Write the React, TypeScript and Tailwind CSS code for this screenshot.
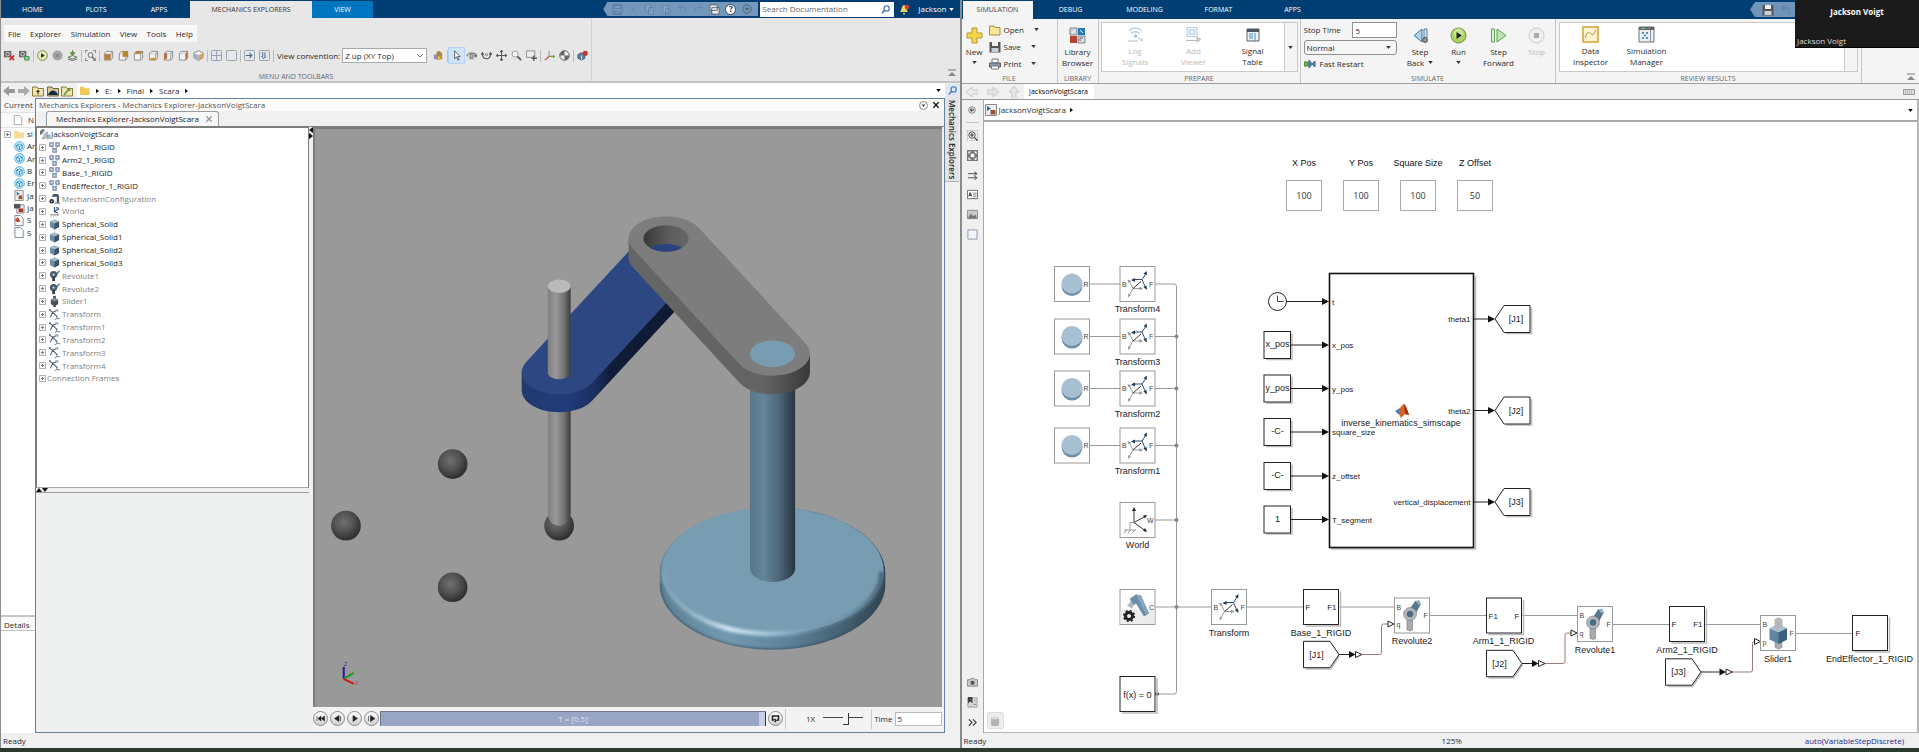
import type { ReactNode } from 'react'

// ---------------------------------------------------------------- helpers

function Ico({ children, size = 'w-3 h-3', box = '0 0 12 12' }: { children: ReactNode; size?: string; box?: string }) {
  return <svg viewBox={box} className={`${size} shrink-0`} fill="none">{children}</svg>
}

function Caret({ className = 'text-[#333]' }: { className?: string }) {
  return <svg viewBox="0 0 6 4" className={`w-[5px] h-[3px] shrink-0 ${className}`}><path d="M0 0h6L3 4z" fill="currentColor" /></svg>
}

function Crumb() {
  return <svg viewBox="0 0 4 6" className="w-[3px] h-1.5 shrink-0"><path d="M0 0l4 3-4 3z" fill="#111" /></svg>
}

function Collapse() {
  return (
    <button aria-label="Collapse toolstrip" className="w-2 h-2 flex">
      <Ico size="w-2 h-2" box="0 0 8 8"><path d="M0 1h8" stroke="#777" /><path d="M4 3l4 4H0z" fill="#888" /></Ico>
    </button>
  )
}

// ---------------------------------------------------------------- toolbar of the explorer

const CUBE = (
  <>
    <path d="M1.500 4h7v7h-7z" fill="#f4f4f4" stroke="#8a8a8a" />
    <path d="M1.500 4l2-2.500h7L8.500 4M10.500 1.500v7l-2 2.500" fill="#eee" stroke="#8a8a8a" />
  </>
)

const PANE = <rect x=".5" y=".5" width="11" height="11" rx="1" fill="#e4e8ec" stroke="#8f9ba7" />

const TOOLBAR: { label: string; icon: ReactNode }[][] = [
  [
    { label: 'Remove link', icon: <><rect x="0" y="1" width="8" height="7" fill="#666" /><circle cx="4" cy="4.500" r="2" stroke="#ddd" /><path d="M6 6l5 5M11 6l-5 5" stroke="#c33c30" strokeWidth="2" /></> },
    { label: 'Add link', icon: <><rect x="0" y="1" width="8" height="7" fill="#666" /><circle cx="4" cy="4.500" r="2" stroke="#ddd" /><path d="M6 7h5v4H6z" fill="#8fc79a" stroke="#3e9550" /></> },
  ],
  [
    { label: 'Run', icon: <><circle cx="6" cy="6" r="5.300" fill="#e6edbd" stroke="#6f8a35" /><path d="M4.500 3.500l4 2.500-4 2.500z" fill="#223" /></> },
    { label: 'Stop', icon: <><circle cx="6" cy="6" r="5.500" fill="#a5a5a5" /><rect x="4" y="4" width="4" height="4" fill="#8d8d8d" /></> },
    { label: 'Update', icon: <><path d="M6 0v4M3.500 3L6 6l2.500-3z" stroke="#4f8a3c" fill="#67a24e" /><path d="M1 8l5-2 5 2-5 2z" fill="#dfe8da" stroke="#5b6b57" /><path d="M1 10l5 1.500L11 10" stroke="#5b6b57" /></> },
  ],
  [
    { label: 'Fit to view', icon: <><path d="M.5 3V.5H3M9 .5h2.500V3M.5 9v2.500H3M9 11.500h2.500V9" stroke="#777" /><circle cx="6" cy="5.500" r="2.600" fill="#eee" stroke="#666" /><path d="M8 8l2.500 2.500" stroke="#555" strokeWidth="1.500" /></> },
  ],
  [
    { label: 'Front view', icon: <>{CUBE}<path d="M2 4.500h6v6H2z" fill="#c47b29" /></> },
    { label: 'Back view', icon: <>{CUBE}<path d="M5 1.500h6v6H5z" fill="#b98627" /></> },
    { label: 'Top view', icon: <>{CUBE}<path d="M1.500 4l2-2.500h7L8.500 4z" fill="#b97a35" /></> },
    { label: 'Bottom view', icon: <>{CUBE}<path d="M1.500 11l2-2.500h6L8.500 11z" fill="#c99a3d" /></> },
    { label: 'Left view', icon: <>{CUBE}<path d="M1.500 4l3-1v6l-3 2z" fill="#b5703a" /></> },
    { label: 'Right view', icon: <>{CUBE}<path d="M8.500 4l2-2.500v7l-2 2.500z" fill="#c4732f" /></> },
    { label: 'Isometric view', icon: <><path d="M6 .8l5 2.400v5.400L6 11.400 1 8.600V3.200z" fill="#f7f7f7" stroke="#888" /><path d="M1 3.200l5 2.600v5.600L1 8.600z" fill="#9fb4cb" /><path d="M6 5.800l5-2.600v5.400l-5 2.800z" fill="#caa46b" /></> },
  ],
  [
    { label: 'Split four', icon: <>{PANE}<path d="M6 1v10M1 6h10" stroke="#8f9ba7" /></> },
    { label: 'Single view', icon: PANE },
  ],
  [
    { label: 'Split vertically', icon: <>{PANE}<path d="M2 6h6M6 3.500L8.500 6 6 8.500" stroke="#4a6480" strokeWidth="1.200" /></> },
    { label: 'Split horizontally', icon: <>{PANE}<path d="M4 2v6M6.500 8.500v-6M2.500 7L5 9.500 7.500 7" stroke="#4a6480" /></> },
  ],
]

const TOOLBAR_RIGHT: { label: string; icon: ReactNode; active?: boolean }[][] = [
  [{ label: 'Highlight', icon: <><path d="M4 2l4-1v9l-4 1z" fill="#7d8f3a" /><path d="M6 2l4 1v7H7z" fill="#c9813a" /><path d="M1 5h4v5H1z" fill="#8d8da8" /><path d="M5 7h3v4H5z" fill="#d9c33b" /></> }],
  [
    { label: 'Select', active: true, icon: <path d="M4 1v8.500l2-2 1.500 3.500 1.300-.6-1.500-3.300H10z" fill="#fff" stroke="#445" strokeWidth=".9" /> },
    { label: 'Rotate', icon: <><path d="M1 7c0-5 10-5 10 0M9 6l2 1.500L12 5" stroke="#666" strokeWidth="1.200" /><circle cx="6" cy="6.500" r="2" fill="#bbb" stroke="#666" /><path d="M3 9.500h6" stroke="#888" /></> },
    { label: 'Roll', icon: <><path d="M1.500 3.500c0 8 9 8 9 0M0 5l1.500-2L3 5M9 5l1.500-2L12 5" stroke="#555" strokeWidth="1.200" /><circle cx="6" cy="5" r="1.200" stroke="#777" /></> },
    { label: 'Pan', icon: <path d="M6 .5v11M.5 6h11M4.500 2L6 .5 7.500 2M4.500 10L6 11.500 7.500 10M2 4.500L.5 6 2 7.500M10 4.500L11.500 6 10 7.500" stroke="#555" strokeWidth="1.200" /> },
    { label: 'Zoom', icon: <><circle cx="4.500" cy="4.500" r="3.300" fill="#f6f6f6" stroke="#999" /><path d="M7 7l4 4" stroke="#555" strokeWidth="2" /></> },
    { label: 'Zoom region', icon: <><path d="M.5 1h9v7h-9z" fill="#eee" stroke="#888" /><path d="M8.500 6v6M6 9h6" stroke="#555" strokeWidth="1.400" /></> },
  ],
  [
    { label: 'Show frames', icon: <><path d="M5.500 7V1" stroke="#888" /><path d="M5.500 7h6M10 5.500L11.500 7 10 8.500" stroke="#6aa832" strokeWidth="1.200" /><path d="M5.500 7L1 11" stroke="#c0392b" strokeWidth="1.200" /></> },
    { label: 'Centers of mass', icon: <><circle cx="6" cy="6" r="5.200" fill="#eee" stroke="#555" /><path d="M6 6V.8A5.200 5.200 0 0 0 .8 6zM6 6v5.200A5.200 5.200 0 0 0 11.200 6z" fill="#666" /></> },
  ],
  [{ label: 'Record', icon: <><path d="M1 5l4-2 3.500 2v4L5 11 1 9z" fill="#5b7ea3" stroke="#44546a" /><path d="M5 6v5" stroke="#dde" /><circle cx="9" cy="3.500" r="2.800" fill="#c8352b" /></> }],
]

function ToolGroup({ items, last }: { items: { label: string; icon: ReactNode; active?: boolean }[]; last?: boolean }) {
  return (
    <div className="flex items-center">
      {items.map((t) => (
        <button key={t.label} aria-label={t.label} className={`w-[15px] h-[15px] flex items-center justify-center ${t.active ? 'bg-[#cfe4f7] outline outline-[#b5d3ee]' : ''}`}>
          <Ico size="w-[11px] h-[11px]">{t.icon}</Ico>
        </button>
      ))}
      {!last && <span className="w-px h-3 mx-px bg-[#bdbdbd]" />}
    </div>
  )
}

// ---------------------------------------------------------------- tree

type NodeKind = 'rigid' | 'config' | 'world' | 'solid' | 'revolute' | 'slider' | 'transform' | 'none'

const TREE: { label: string; kind: NodeKind; dim?: boolean }[] = [
  { label: 'Arm1_1_RIGID', kind: 'rigid' },
  { label: 'Arm2_1_RIGID', kind: 'rigid' },
  { label: 'Base_1_RIGID', kind: 'rigid' },
  { label: 'EndEffector_1_RIGID', kind: 'rigid' },
  { label: 'MechanismConfiguration', kind: 'config', dim: true },
  { label: 'World', kind: 'world', dim: true },
  { label: 'Spherical_Solid', kind: 'solid' },
  { label: 'Spherical_Solid1', kind: 'solid' },
  { label: 'Spherical_Solid2', kind: 'solid' },
  { label: 'Spherical_Solid3', kind: 'solid' },
  { label: 'Revolute1', kind: 'revolute', dim: true },
  { label: 'Revolute2', kind: 'revolute', dim: true },
  { label: 'Slider1', kind: 'slider', dim: true },
  { label: 'Transform', kind: 'transform', dim: true },
  { label: 'Transform1', kind: 'transform', dim: true },
  { label: 'Transform2', kind: 'transform', dim: true },
  { label: 'Transform3', kind: 'transform', dim: true },
  { label: 'Transform4', kind: 'transform', dim: true },
  { label: 'Connection Frames', kind: 'none', dim: true },
]

const NODE_ICONS: Record<NodeKind, ReactNode> = {
  rigid: <><path d="M3 4.500v1.500l3 2M9 4.500v1.500L6 8" stroke="#9aa6c4" /><path d="M1 1h3.500v3.500H1zM7.500 1H11v3.500H7.500zM4.300 7.500h3.500V11H4.300z" fill="#e3e8f3" stroke="#7484ab" strokeWidth="1.300" /></>,
  config: <><path d="M3 4l1.500-3h5L11 3v7.500H8.500V4H6z" fill="#41596d" /><circle cx="3" cy="9" r="2.500" fill="#222d36" /><circle cx="3" cy="9" r=".9" fill="#ccc" /><path d="M6 11h6" stroke="#41596d" /></>,
  world: <><path d="M6 7V1M6 6l5-3M6 6l4 2M7.500 2h3" stroke="#3d5873" strokeWidth="1.300" /><path d="M1 9.500h10M2 11.500l2-2M5 11.500l2-2M8 11.500l2-2" stroke="#777" strokeWidth=".8" /></>,
  solid: <><path d="M6 .5l5 2.200v6L6 11.500 1 8.700v-6z" fill="#6d8aa1" /><path d="M6 .5l5 2.200L6 5 1 2.700z" fill="#a5bac9" /><path d="M6 5l5-2.300v6L6 11.500z" fill="#3c5468" /></>,
  revolute: <><path d="M7 4l4-4 1 2-4 4z" fill="#6e8ba3" /><circle cx="5" cy="5" r="4" fill="#4a5a66" /><circle cx="5" cy="5" r="1.300" fill="#b9c8d4" /><path d="M3.500 8h3v4h-3z" fill="#333d45" /></>,
  slider: <><path d="M4.500 0h3v12h-3z" fill="#555" /><path d="M2 4l4-2 4 2v5l-4 2-4-2z" fill="#4c4f52" /><path d="M2 4l4-2 4 2-4 2z" fill="#898c8f" /></>,
  transform: <><path d="M0 1l4 2.500L8 2M4 3.500L1.500 9M4 3.500l5 5" stroke="#4b6076" strokeWidth="1.100" /><path d="M12 10.500H8.500V7M8.500 10.500L6 12M0 .5h2M7 1h2.500v2" stroke="#6c7885" /></>,
  none: null,
}

function Tree() {
  return (
    <ul className="h-[257px] flex flex-col text-[#1d1d1d]">
      <li className="flex-1 flex items-center pl-0.5">
        <Ico><path d="M1 3l3-2 2 1-3 4-2 1z" fill="#6b7780" /><path d="M3 11l3-6 3-1-2 6z" fill="#c4c9cd" stroke="#7b858d" strokeWidth=".6" /><path d="M8 7h3v3l-3 1z" fill="#b3b9be" stroke="#7b858d" strokeWidth=".6" /></Ico>
        <span>JacksonVoigtScara</span>
      </li>
      {TREE.map((n) => (
        <li key={n.label} className={`flex-1 flex items-center pl-0.5 ${n.dim ? 'text-[#808080]' : ''}`}>
          <button aria-label={`Expand ${n.label}`} className="flex"><Plus /></button>
          {n.kind !== 'none' && <span className="ml-[3px] mr-px flex"><Ico size="w-[11px] h-[11px]">{NODE_ICONS[n.kind]}</Ico></span>}
          <span className="pl-px">{n.label}</span>
        </li>
      ))}
    </ul>
  )
}

function Plus() {
  return <Ico size="w-[7px] h-[7px]" box="0 0 7 7"><path d="M.5.5h6v6h-6z" fill="#fafafa" stroke="#b0b0b8" /><path d="M2 3.500h3M3.500 2v3" stroke="#777" /></Ico>
}

const CUBE_FILE = <><circle cx="6" cy="6" r="5.200" fill="#e6f5fd" stroke="#35a3dc" /><path d="M3 4.500L6 3l3 1.500V8L6 9.500 3 8zM3 4.500L6 6l3-1.500M6 6v3.500" stroke="#2492cf" /></>
const PAGE = <path d="M1 .5h6l3 3v8H1z" fill="#fbfcff" stroke="#74829c" />

// the column is only wide enough for the first letters of each name
const FILES: { label: string; icon: ReactNode }[] = [
  { label: 'sl', icon: <path d="M0 2h4l1 1.500h6V10H0z" fill="#f5dc9a" /> },
  { label: 'Ar', icon: CUBE_FILE },
  { label: 'Ar', icon: CUBE_FILE },
  { label: 'B', icon: CUBE_FILE },
  { label: 'Er', icon: CUBE_FILE },
  { label: 'Ja', icon: <><path d="M1 .5h9v11H1z" fill="#eee" stroke="#888" /><path d="M3 2l3 2-3 2z" fill="#236da8" /><path d="M5 6h4v4H5z" fill="#a14c3c" /></> },
  { label: 'Ja', icon: <><path d="M3 2h8v9H3z" fill="#eee" stroke="#888" /><path d="M0 1h7v5H0z" fill="#555" /><path d="M5 6h5v4H5z" fill="#a5382c" /></> },
  { label: 'S', icon: <>{PAGE}<path d="M1 6l3-4 3 5-3 1z" fill="#c7432d" /></> },
  { label: 'S', icon: PAGE },
]

// ---------------------------------------------------------------- 3D view

function Robot() {
  return (
    <svg viewBox="314 129 628 577" preserveAspectRatio="xMidYMid slice" className="absolute inset-0 w-full h-full">
      <defs>
        <linearGradient id="column"><stop offset="0" stopColor="#5a7688" /><stop offset=".3" stopColor="#64859a" /><stop offset=".65" stopColor="#4c6678" /><stop offset="1" stopColor="#27343e" /></linearGradient>
        <linearGradient id="rod"><stop offset="0" stopColor="#808080" /><stop offset=".35" stopColor="#989898" /><stop offset=".7" stopColor="#747474" /><stop offset="1" stopColor="#3c3c3c" /></linearGradient>
        <linearGradient id="hole"><stop offset="0" stopColor="#333" /><stop offset=".6" stopColor="#5e5e5e" /><stop offset="1" stopColor="#666" /></linearGradient>
        <linearGradient id="greySide"><stop offset="0" stopColor="#666" /><stop offset=".75" stopColor="#636363" /><stop offset="1" stopColor="#383838" /></linearGradient>
        <linearGradient id="blueSide"><stop offset="0" stopColor="#20396f" /><stop offset=".25" stopColor="#213c7b" /><stop offset=".42" stopColor="#1b2e5e" /><stop offset=".5" stopColor="#101c38" /><stop offset="1" stopColor="#0e182f" /></linearGradient>
        <linearGradient id="disc"><stop offset="0" stopColor="#5d8096" /><stop offset=".3" stopColor="#7299b0" /><stop offset=".55" stopColor="#5f859d" /><stop offset="1" stopColor="#30444f" /></linearGradient>
        <linearGradient id="shine"><stop offset="0" stopColor="#86abc2" stopOpacity=".3" /><stop offset=".3" stopColor="#d4e8f4" /><stop offset=".5" stopColor="#9cc0d4" /><stop offset=".75" stopColor="#6b90a8" stopOpacity=".4" /><stop offset="1" stopColor="#4a6578" /></linearGradient>
        <radialGradient id="ball" cx=".42" cy=".38" r=".62"><stop offset="0" stopColor="#6f6f6f" /><stop offset=".5" stopColor="#545454" /><stop offset="1" stopColor="#2d2f2f" /></radialGradient>
        <clipPath id="holeClip"><ellipse cx="665.700" cy="238.300" rx="22.500" ry="13.200" /></clipPath>
        <clipPath id="discClip"><path d="M659 573a113 66.400 0 0 1 226 0v9.500a113 66.400 0 0 1-226 0z" /></clipPath>
        <filter id="soft"><feGaussianBlur stdDeviation="1.600" /></filter>
      </defs>
      <path d="M314 129h628v577H314z" fill="#999" />

      {/* base */}
      <g clipPath="url(#discClip)">
        <path d="M659 573a113 66.400 0 0 1 226 0v9.500a113 66.400 0 0 1-226 0z" fill="url(#disc)" />
        <ellipse cx="772" cy="570" rx="111" ry="63" fill="#789cb2" />
        <path d="M663 571a109 62 0 0 0 218 0" fill="none" stroke="url(#shine)" strokeWidth="5" filter="url(#soft)" />
        <path d="M659 582.500a113 66.400 0 0 0 226 0" fill="none" stroke="#33495a" strokeWidth="2" filter="url(#soft)" />
      </g>

      {/* column */}
      <path d="M749.600 370h45v198a22.500 13.200 0 0 1-45 0z" fill="url(#column)" />

      {/* lower rod */}
      <circle cx="559" cy="525" r="14.800" fill="url(#ball)" />
      <path d="M547.700 400h22.800v112c0 8-5 13-11.400 13s-11.400-5-11.400-13z" fill="url(#rod)" />

      {/* blue arm */}
      <path d="M521.600 372v17.700a37.400 22 0 0 0 70.300 10.500L698.600 285v-18L560 372z" fill="url(#blueSide)" />
      <path d="M526.100 361.500L632.800 246.500A37.400 22 0 0 1 698.600 267.500L591.900 382.500A37.400 22 0 0 1 526.100 361.500z" fill="#2d4783" />

      {/* upper rod */}
      <path d="M547.700 286h22.800v86a11.400 6.700 0 0 1-22.800 0z" fill="url(#rod)" />
      <ellipse cx="559.100" cy="286" rx="11.400" ry="6.700" fill="#bababa" />

      {/* grey arm */}
      <path d="M628.300 238.300v18.500a37.400 22 0 0 0 4.500 10.500L739.100 382.300A37.400 22 0 0 0 809.400 371.800v-18.500L700 240z" fill="url(#greySide)" />
      <path d="M632.800 248.800A37.400 22 0 0 1 698.600 227.800L804.900 342.800A37.400 22 0 0 1 739.100 363.800z" fill="#7d7d7d" />
      <g clipPath="url(#holeClip)">
        <path d="M640 220h50v40h-50z" fill="url(#hole)" />
        <ellipse cx="665.700" cy="257" rx="22.500" ry="13.200" fill="#2a4380" />
      </g>
      <ellipse cx="772" cy="353.300" rx="22.500" ry="13.200" fill="#789cb2" />

      {/* target points */}
      <circle cx="452.700" cy="463.500" r="14.800" fill="url(#ball)" />
      <circle cx="346.200" cy="525" r="14.800" fill="url(#ball)" />
      <circle cx="452.700" cy="586.500" r="14.800" fill="url(#ball)" />

      {/* axis triad */}
      <g strokeWidth="2" fontSize="6" fontFamily="Liberation Sans, sans-serif">
        <path d="M344 678v-12" stroke="#1a1a9c" />
        <path d="M344 678l10-6" stroke="#1f9a2a" />
        <path d="M344 678l10 5" stroke="#d01414" />
        <text x="344" y="665" fill="#4a35c0">Z</text>
        <text x="355" y="671" fill="#35c04a">Y</text>
        <text x="355" y="684" fill="#d0306a">X</text>
      </g>
    </svg>
  )
}

const PLAYER: { label: string; d: string }[] = [
  { label: 'Rewind', d: 'M4 5v5M8 5L5 7.500 8 10zM11.500 5l-3 2.500 3 2.500z' },
  { label: 'Step back', d: 'M9 4.500L4.500 7.500 9 10.500zM10.500 5v5' },
  { label: 'Play', d: 'M6 4.500l4.500 3-4.500 3z' },
  { label: 'Step forward', d: 'M4.500 5v5M6.500 4.500l4.500 3-4.500 3z' },
]

function RoundButton({ label, d, hollow }: { label: string; d: string; hollow?: boolean }) {
  return (
    <button aria-label={label} className="w-[15px] h-[15px] shrink-0 rounded-full border border-[#8a8a8a] bg-gradient-to-b from-white to-[#cfcfcf] flex items-center justify-center">
      <Ico size="w-[15px] h-[15px]" box="0 0 15 15"><path d={d} fill={hollow ? 'none' : '#222'} stroke="#222" strokeWidth={hollow ? 1.5 : 0.6} /></Ico>
    </button>
  )
}

function PlayerBar() {
  return (
    <div className="h-[23px] shrink-0 flex items-center bg-[#f3f3f3]">
      <div className="flex gap-[2px]">{PLAYER.map((p) => <RoundButton key={p.label} {...p} />)}</div>
      <div className="relative flex-1 h-[15px] ml-px mr-0.5">
        <input
          type="range" aria-label="Playback position" defaultValue={100}
          className="block w-full h-[15px] appearance-none bg-[#99a5c5] border-t border-l border-[#6f7890] [&::-webkit-slider-thumb]:appearance-none [&::-webkit-slider-thumb]:w-[7px] [&::-webkit-slider-thumb]:h-[14px] [&::-webkit-slider-thumb]:bg-[#c8cfe4] [&::-webkit-slider-thumb]:border-r [&::-webkit-slider-thumb]:border-[#333]"
        />
        <span className="absolute inset-0 flex items-center justify-center text-[#dfe5f5] pointer-events-none">T = [0.5]</span>
      </div>
      <RoundButton label="Loop" hollow d="M6 9H4.500V5h6v4H9M6.500 8L8 9.500 6.500 11" />
      <span className="w-px h-5 ml-0.5 mr-5 bg-[#c9c9c9]" />
      <label htmlFor="speed">1X</label>
      <input
        id="speed" type="range" defaultValue={58}
        className="w-10 h-3 mx-2 appearance-none bg-[linear-gradient(#444,#444)] bg-[length:100%_1px] bg-no-repeat bg-[position:0_40%] [&::-webkit-slider-thumb]:appearance-none [&::-webkit-slider-thumb]:w-1.5 [&::-webkit-slider-thumb]:h-3 [&::-webkit-slider-thumb]:bg-[#f3f3f3] [&::-webkit-slider-thumb]:border-r [&::-webkit-slider-thumb]:border-b [&::-webkit-slider-thumb]:border-[#333]"
      />
      <span className="w-px h-5 mr-0.5 bg-[#c9c9c9]" />
      <label htmlFor="time">Time</label>
      <input id="time" defaultValue="5" className="w-[47px] h-[14px] ml-0.5 mr-0.5 px-0.5 bg-white border border-[#bbb]" />
    </div>
  )
}

// ---------------------------------------------------------------- left window

const QUICK: ReactNode[] = [
  <path key="q" d="M1 1h10v10H1zM3 1h6v4H3zM3 8h6v3H3z" fill="#7c9cba" stroke="#547a9f" />,
  <path key="q" d="M8 1L4 8M3 10l3-3 3 3" stroke="#6589ab" />,
  <path key="q" d="M2 1h5v7H2zM5 4h5v7H5z" fill="#89a7c2" stroke="#6085a8" />,
  <path key="q" d="M2 2h6v8H2zM5 5h5v6H5z" fill="#89a7c2" stroke="#6085a8" />,
  <path key="q" d="M2 4h6c3 0 3 4 0 4M4 2L2 4l2 2" stroke="#6085a8" />,
  <path key="q" d="M10 4H4c-3 0-3 4 0 4M8 2l2 2-2 2" stroke="#6085a8" />,
  <path key="q" d="M1 1h8v6H1zM3 4h8v7H3z" fill="#e8eef4" stroke="#5a5f64" />,
]

function ExplorerHeader() {
  return (
    <header className="h-[18px] shrink-0 flex items-stretch justify-between bg-[#003d73] text-white">
      <nav className="flex text-[7px] pt-px">
        <button className="w-[63px]">HOME</button>
        <button className="w-16">PLOTS</button>
        <button className="w-[62px]">APPS</button>
        <button className="w-[122px] bg-[#e7e7e7] text-[#333]">MECHANICS EXPLORERS</button>
        <button className="w-[61px] bg-[#0076c0]">VIEW</button>
      </nav>
      <div className="flex items-center">
        <div className="h-[14px] w-[155px] pl-1.5 pr-1 flex items-center justify-around bg-[#7398bb] [clip-path:polygon(4px_0,100%_0,100%_100%,4px_100%,0_50%)]">
          {QUICK.map((q, i) => <button key={i} aria-label={`Quick action ${i + 1}`} className="flex"><Ico size="w-[11px] h-[11px]">{q}</Ico></button>)}
          <button aria-label="Help" className="w-[11px] h-[11px] rounded-full bg-white border border-[#345] text-[#224] font-bold leading-[8px]">?</button>
          <button aria-label="More" className="flex"><Ico size="w-[10px] h-[10px]"><circle cx="6" cy="6" r="5" stroke="#4a5a6a" /><path d="M3.500 4.500h5L6 8z" fill="#4a5a6a" /></Ico></button>
        </div>
        <div className="ml-0.5 w-[134px] h-[15px] flex items-center bg-white pr-1">
          <input aria-label="Search Documentation" placeholder="Search Documentation" className="flex-1 min-w-0 px-0.5 placeholder:text-[#666]" />
          <Ico size="w-[9px] h-[9px]"><circle cx="7.500" cy="4.500" r="3.500" stroke="#3a6ab0" strokeWidth="1.500" /><path d="M5 7l-4 4" stroke="#3a6ab0" strokeWidth="2" /></Ico>
        </div>
        <button aria-label="Notifications" className="ml-1 flex"><Ico><path d="M2 9c2-2 1-6 4-7 3 1 2 5 4 7z" fill="#f3d15c" /><path d="M5 10h2v1.500H5z" fill="#e9b93c" /><circle cx="9" cy="4" r="2.300" fill="#d6402b" /></Ico></button>
        <button className="ml-2 mr-1.5 flex items-center gap-0.5">Jackson <Caret className="text-white" /></button>
      </div>
    </header>
  )
}

const NAV_ICONS: { label: string; icon: ReactNode }[] = [
  { label: 'Back', icon: <path d="M6 1v3h6v4H6v3L0 6z" fill="#999" /> },
  { label: 'Forward', icon: <path d="M6 1v3H0v4h6v3l6-5z" fill="#aaa" /> },
  { label: 'Up one level', icon: <><path d="M.5 2H5l1 1.500h5.500V11H.5z" fill="#f2e3ad" stroke="#8c7a3a" /><path d="M6 9.500V6" stroke="#222" /><path d="M4 7l2-2.500L8 7z" fill="#222" /></> },
  { label: 'Home folder', icon: <><path d="M.5 2H5l1 1.500h5.500V11H.5z" fill="#d8c98e" stroke="#6d6335" /><path d="M1 10c2-6 8-6 10 0z" fill="#0d2a4e" /></> },
  { label: 'Browse', icon: <><path d="M.5 2H5l1 1.500h5.500V11H.5z" fill="#efe3ae" stroke="#8c7a3a" /><path d="M3 10l5-6 1 2" stroke="#5b9a3b" strokeWidth="1.600" /></> },
]

function ExplorerWindow() {
  return (
    <section className="w-1/2 flex flex-col min-w-0 border-l border-[#8c8c8c] bg-[#f0f0f0]">
      <ExplorerHeader />

      {/* toolstrip */}
      <div className="h-[65px] shrink-0 flex bg-[#e7e7e7] border-b-2 border-[#c2c2c2]">
        <div className="w-[591px] flex flex-col border-r border-[#d0d0d0] pt-[7px]">
          <nav className="w-[193px] h-[17px] ml-[3px] px-1 flex items-center justify-between bg-[#f8f8f8]">
            {['File', 'Explorer', 'Simulation', 'View', 'Tools', 'Help'].map((m) => <button key={m}>{m}</button>)}
          </nav>
          <div className="flex items-center pl-px pt-1.5">
            {TOOLBAR.map((g, i) => <ToolGroup key={i} items={g} />)}
            <label htmlFor="view-convention" className="mx-0.5 whitespace-nowrap">View convention:</label>
            <div className="relative mr-1">
              <select id="view-convention" className="w-[85px] h-[15px] appearance-none bg-white border border-[#a9a9a9] pl-0.5">
                <option>Z up (XY Top)</option>
              </select>
              <svg viewBox="0 0 6 4" className="absolute right-1 top-1.5 w-1.5 h-1 pointer-events-none"><path d="M0 0l3 3 3-3" fill="none" stroke="#555" strokeWidth=".8" /></svg>
            </div>
            {TOOLBAR_RIGHT.map((g, i) => <ToolGroup key={i} items={g} last={i === TOOLBAR_RIGHT.length - 1} />)}
          </div>
          <div className="mt-auto text-[7px] leading-[9px] text-center text-[#666]">MENU AND TOOLBARS</div>
        </div>
        <div className="flex-1 flex items-end justify-end pr-1 pb-1"><Collapse /></div>
      </div>

      {/* path bar */}
      <div className="h-[15px] shrink-0 flex items-center">
        <div className="w-[76px] flex items-center justify-between pl-0.5 pr-1">
          {NAV_ICONS.map((n) => <button key={n.label} aria-label={n.label} className="flex"><Ico>{n.icon}</Ico></button>)}
        </div>
        <div className="flex-1 h-full flex items-center gap-1.5 bg-white pl-0.5 pr-1">
          <Ico size="w-[11px] h-[11px]"><path d="M1 2h4l1 1.500h5.500V11H1z" fill="#f0c659" /></Ico>
          <Crumb />
          <button>E:</button><Crumb />
          <button>Final</button><Crumb />
          <button>Scara</button><Crumb />
          <span className="flex-1" />
          <Caret className="text-black" />
        </div>
        <button aria-label="Search path" className="w-[15px] h-[14px] flex items-center justify-center bg-[#dfe6f1]">
          <Ico size="w-[9px] h-[9px]"><circle cx="7.500" cy="4.500" r="3.500" stroke="#3a78b8" strokeWidth="1.500" /><path d="M5 7l-4 4" stroke="#3a78b8" strokeWidth="2" /></Ico>
        </button>
      </div>

      <div className="flex-1 min-h-0 flex">
        {/* folder column, squeezed by the explorer */}
        <aside className="w-[34px] shrink-0 flex flex-col bg-white whitespace-nowrap">
          <h2 className="h-3.5 pl-[3px] pt-0.5 bg-[#f6f6f6] text-[#444]">Current</h2>
          <div className="h-4 flex items-center justify-between pl-3 pr-px bg-[#fafafa] border-y border-[#e3e3e3]"><Ico size="w-[10px] h-[10px]"><path d="M1.500.5h6l3 3v8h-9z" fill="#fff" stroke="#999" /></Ico>N</div>
          <ul className="h-[111px] flex flex-col">
            {FILES.map((f, i) => (
              <li key={i} className="flex-1 flex items-center pl-[3px]">
                <span className="w-2.5 shrink-0 flex">{i === 0 && <Plus />}</span>
                <Ico size="w-[11px] h-[11px]">{f.icon}</Ico>
                <span className="pl-0.5">{f.label}</span>
              </li>
            ))}
          </ul>
          <span className="flex-1" />
          <h2 className="h-4 pl-[3px] pt-[3px] border-t-2 border-b border-[#c4c4c4] bg-[#fafafa]">Details</h2>
          <div className="h-[102px]" />
        </aside>

        <div className="flex-1 min-w-0 flex flex-col border border-[#64819f] bg-[#f0f0f0]">
          <div className="h-3 shrink-0 flex items-center justify-between bg-[#fbfbfb] text-[#555] pl-[3px] pr-1">
            <h2>Mechanics Explorers - Mechanics Explorer-JacksonVoigtScara</h2>
            <div className="flex items-center gap-1">
              <button aria-label="Undock" className="flex"><Ico size="w-[9px] h-[9px]"><circle cx="6" cy="6" r="5.300" stroke="#666" /><path d="M3.500 4.500h5L6 8z" fill="#444" /></Ico></button>
              <button aria-label="Close" className="flex"><Ico size="w-2 h-2"><path d="M2 2l8 8M10 2l-8 8" stroke="#111" strokeWidth="2" /></Ico></button>
            </div>
          </div>
          <div className="h-4 shrink-0 flex items-end border-b border-[#808080] pl-2.5">
            <button className="h-[15px] w-[173px] flex items-center justify-between pl-[9px] pr-[5px] bg-[#f7f7f7] border border-b-0 border-[#9a9a9a] rounded-t-[3px] text-[#222]">
              Mechanics Explorer-JacksonVoigtScara
              <Ico size="w-2 h-2"><path d="M2 2l8 8M10 2l-8 8" stroke="#999" strokeWidth="2" /></Ico>
            </button>
          </div>

          <div className="flex-1 min-h-0 flex pb-0.5">
            <div className="w-[273px] shrink-0 flex flex-col">
              <div className="flex-[360] min-h-0 bg-white border border-[#7c7c7c] border-b-[#a5a5a5]"><Tree /></div>
              <div className="h-1 shrink-0 flex items-center"><Ico size="w-3 h-1" box="0 0 12 4"><path d="M0 4l3-4 3 4zM6 0h6L9 4z" fill="#111" /></Ico></div>
              <div className="flex-[237] border-t border-[#9c9c9c] bg-[#edf0ef]" />
            </div>
            <div className="w-1 shrink-0"><Ico size="w-1 h-3" box="0 0 4 12"><path d="M4 0v6L0 3zM0 6l4 3-4 3z" fill="#111" /></Ico></div>
            <div className="flex-1 min-w-0 flex flex-col">
              <div className="relative flex-1 mr-0.5 border-2 border-[#7c7c7c] border-r-0 border-b-0 overflow-hidden"><Robot /></div>
              <PlayerBar />
            </div>
          </div>
        </div>

        <div className="w-[15px] shrink-0">
          <button className="w-[14px] h-[84px] flex items-center justify-center bg-[#e4e4e4] border-b border-[#b0b0b0] [writing-mode:vertical-rl] font-semibold text-[#222]">Mechanics Explorers</button>
        </div>
      </div>

      <footer className="h-[15px] shrink-0 flex items-center pl-0.5">Ready</footer>
    </section>
  )
}

// ---------------------------------------------------------------- ribbon of the model window

function Section({ title, className, children }: { title: string; className: string; children: ReactNode }) {
  return (
    <div className={`shrink-0 flex flex-col border-r border-[#c6c6c6] pt-[3px] ${className}`}>
      <div className="flex-1 flex">{children}</div>
      <div className="text-[7px] leading-[9px] text-center text-[#666]">{title}</div>
    </div>
  )
}

function BigButton({ lines, icon, className, dim, menu }: { lines: string[]; icon: ReactNode; className: string; dim?: boolean; menu?: boolean }) {
  return (
    <button className={`shrink-0 flex flex-col items-center leading-[11px] ${dim ? 'text-[#bbb]' : ''} ${className}`}>
      <span className="h-[22px] flex items-center"><Ico size="w-[17px] h-[17px]" box="0 0 17 17">{icon}</Ico></span>
      {lines.map((l, i) => (
        <span key={l} className="flex items-center gap-1">{l}{menu && i === 1 && <Caret />}</span>
      ))}
      {menu && lines.length === 1 && <span className="h-[11px] flex items-center"><Caret /></span>}
    </button>
  )
}

const FILE_ACTIONS: { label: string; icon: ReactNode }[] = [
  { label: 'Open', icon: <path d="M.5 2H5l1 1.500h5v7.500H.5z" fill="#f7e59a" stroke="#a48d3c" /> },
  { label: 'Save', icon: <><path d="M.5 1h11v10.500H.5z" fill="#555" /><path d="M3 1h6v4H3z" fill="#eee" /><path d="M2.500 7h7v4h-7z" fill="#c9cfd6" /></> },
  { label: 'Print', icon: <><path d="M3 1h6v4H3z" fill="#fff" stroke="#777" /><path d="M.5 5h11v4H.5z" fill="#8b98a6" stroke="#56616c" /><path d="M2.500 8h7v3h-7z" fill="#fff" stroke="#777" /></> },
]

function ModelRibbon() {
  return (
    <div className="h-[65px] shrink-0 flex bg-[#f4f4f4] border-b border-[#9f9f9f]">
      <Section title="FILE" className="w-24">
        <BigButton
          lines={['New']} menu className="w-[25px] pt-0.5"
          icon={<path d="M6 1h5v5h5v5h-5v5H6v-5H1V6h5z" fill="#f5d64c" stroke="#b89432" />}
        />
        <div className="flex flex-col justify-between pl-0.5 pb-[3px]">
          {FILE_ACTIONS.map((f) => (
            <button key={f.label} className="h-[15px] flex items-center">
              <Ico>{f.icon}</Ico><span className="pl-[3px] pr-2.5">{f.label}</span><Caret />
            </button>
          ))}
        </div>
      </Section>
      <Section title="LIBRARY" className="w-[41px]">
        <BigButton
          lines={['Library', 'Browser']} className="w-full pt-0.5"
          icon={<><path d="M1 1h7v7H1z" fill="#cfd5da" stroke="#7c858d" /><path d="M9 1h7v7H9z" fill="#2279b5" /><path d="M1 9h7v7H1z" fill="#b9442d" /><path d="M9 9h7v7H9z" fill="#dcdfe2" stroke="#7c858d" /><path d="M3 6l3-3M11 3l3 3" stroke="#fff" /><path d="M11 14v-3h3" stroke="#666" /></>}
        />
      </Section>
      <Section title="PREPARE" className="w-[202px]">
        <div className="flex-1 mb-0.5 mx-0.5 flex bg-white border border-[#c9c9c9]">
          <div className="flex-1 flex pl-1">
            <BigButton
              lines={['Log', 'Signals']} dim className="w-[59px]"
              icon={<><path d="M2 5c4-4 9-4 13 0M4 7.500c3-2.500 6-2.500 9 0" stroke="#bcd3e6" strokeWidth="1.500" /><circle cx="8.500" cy="10" r="1.800" fill="#a9c6df" /><path d="M1 15h10M11 12l4 3v-3" stroke="#bbb" /></>}
            />
            <BigButton
              lines={['Add', 'Viewer']} dim className="w-[58px]"
              icon={<><path d="M2 1.500h10v9H2z" fill="#eef4f9" stroke="#b3cce0" /><path d="M4.500 4h5v4h-5z" stroke="#b3cce0" /><path d="M1 14.500h11M12 11v5l4-2.500z" stroke="#bbb" fill="#ccc" /></>}
            />
            <BigButton
              lines={['Signal', 'Table']} className="w-[60px]"
              icon={<><path d="M3 3h12v12H3z" fill="#eef3f8" stroke="#56616c" /><path d="M3 3h12v3H3z" fill="#4a5865" /><path d="M5 8h4M5 10h4M5 12h4M11 7v8" stroke="#4f8cc0" /></>}
            />
          </div>
          <button aria-label="More tools" className="w-[13px] flex items-center justify-center bg-[#f4f4f4] border-l border-[#c9c9c9]"><Caret /></button>
        </div>
      </Section>
      <Section title="SIMULATE" className="w-[255px]">
        <div className="w-24 pl-[3px] pb-[3px] flex flex-col justify-between">
          <div className="flex items-center justify-between">
            <label htmlFor="stop-time">Stop Time</label>
            <input id="stop-time" defaultValue="5" className="w-[45px] h-4 px-[3px] bg-white border border-[#8f8f8f]" />
          </div>
          <div className="relative">
            <select aria-label="Simulation mode" className="block w-full h-[15px] appearance-none pl-0.5 bg-[#f6f6f6] border border-[#8f8f8f] rounded-[3px]"><option>Normal</option></select>
            <span className="absolute right-1.5 top-1.5 pointer-events-none flex"><Caret /></span>
          </div>
          <button className="h-[14px] flex items-center gap-1">
            <Ico><path d="M0 4h4v4H0z" fill="#76b352" stroke="#3f7a2e" /><path d="M5 2l3 4-3 4zM11 3L8 6l3 3z" fill="#4a88bd" stroke="#3c6288" /></Ico>Fast Restart
          </button>
        </div>
        <BigButton lines={['Step', 'Back']} menu className="w-[47px] pt-0.5" icon={<><path d="M10 2v13L2 8.500z" fill="#b3d2ea" stroke="#3c78a8" /><path d="M12 2h3v9h-3z" fill="#cfe0ee" stroke="#5d7f9c" /><circle cx="13" cy="13" r="2.500" fill="#8c959d" stroke="#555" /></>} />
        <BigButton lines={['Run']} menu className="w-[30px] pt-0.5" icon={<><circle cx="8.500" cy="8.500" r="7.500" fill="#a9d35f" stroke="#6d8f44" /><circle cx="8.500" cy="6.500" r="5" fill="#c7e592" /><path d="M6.500 5l5.500 3.500L6.500 12z" fill="#222" /></>} />
        <BigButton lines={['Step', 'Forward']} className="w-[50px] pt-0.5" icon={<><path d="M1.500 2h3v13h-3z" fill="#dff0da" stroke="#5c9f55" /><path d="M7 2l9 6.500L7 15z" fill="#bfe2b5" stroke="#5c9f55" /></>} />
        <BigButton lines={['Stop']} dim className="w-[26px] pt-0.5" icon={<><circle cx="8.500" cy="8.500" r="7.500" fill="#f0f0f0" stroke="#ccc" /><path d="M6 6h5v5H6z" fill="#aaa" /></>} />
      </Section>
      <Section title="REVIEW RESULTS" className="w-[306px]">
        <div className="flex-1 mb-0.5 mx-[3px] flex bg-white border border-[#c9c9c9]">
          <div className="flex-1 flex pl-[3px]">
            <BigButton lines={['Data', 'Inspector']} className="w-[56px]" icon={<><path d="M1 1h15v15H1z" fill="#fdf3cf" stroke="#d2a437" strokeWidth="1.500" /><path d="M3 12c3-8 4-6 6-4s3 0 5-4" stroke="#b48a4b" /></>} />
            <BigButton lines={['Simulation', 'Manager']} className="w-[56px]" icon={<><path d="M1 1h15v15H1z" fill="#e9eef2" stroke="#6b757e" /><path d="M1 1h15v3H1z" fill="#5b656e" /><path d="M3 2.500h4" stroke="#8cd06b" /><path d="M9 2.500h3" stroke="#d66" /><path d="M12.500 4v12" stroke="#8b959e" /><path d="M4 7h2M8 7h2M6 9.500h2M4 12h2M8 12h2" stroke="#2e74ad" strokeWidth="1.500" /></>} />
          </div>
          <span className="w-[13px] bg-[#f4f4f4] border-l border-[#c9c9c9]" />
        </div>
      </Section>
      <div className="flex-1 flex items-end justify-end pr-1 pb-0.5"><Collapse /></div>
    </div>
  )
}

// ---------------------------------------------------------------- block diagram

function Block({ x, y, heavy, children }: { x: number; y: number; heavy?: boolean; children?: ReactNode }) {
  return (
    <g transform={`translate(${x} ${y})`}>
      {heavy && <path d="M2 36.500h35V2" stroke="#bbb" strokeWidth="1.500" fill="none" />}
      <rect width="35" height="35" fill="#fff" stroke={heavy ? '#222' : '#999'} />
      {children}
    </g>
  )
}

function Label({ x, y, children }: { x: number; y: number; children: string }) {
  return <text x={x} y={y + 2.5} textAnchor="middle">{children}</text>
}

function Port({ x, y, children }: { x: number; y: number; children: string }) {
  return <text x={x} y={y + 2.5} fontSize="7" fill="#444">{children}</text>
}

function SphereBlock({ y }: { y: number }) {
  return (
    <Block x={1054.500} y={y}>
      <circle cx="17.500" cy="19" r="10.500" fill="#6d8ea6" />
      <ellipse cx="17.500" cy="17" rx="10.500" ry="10" fill="#a9c0d2" />
      <Port x={29} y={17.500}>R</Port>
    </Block>
  )
}

function TransformBlock({ x, y }: { x: number; y: number }) {
  return (
    <Block x={x} y={y}>
      <Port x={2} y={17.500}>B</Port>
      <Port x={29} y={17.500}>F</Port>
      <g stroke="#999" fill="#999">
        <path d="M13 22l-3.500-7M13 22h8M13 22l-4 7" />
        <path d="M7.500 13l4 1.500-3 2zM23 22l-3.500-2v4zM8 31l.3-4 2.700 1.700z" stroke="none" />
      </g>
      <path d="M13 22l8-7" stroke="#333" />
      <path d="M22 13l4-6M22 13h-9M22 13l3 7" stroke="#2b4a6c" />
      <path d="M27 4.500l-.4 4.500-3-2zM11 13.500l4-2v4zM27 23.500l-3.700-3 3.200-1.400z" fill="#1f3a58" />
    </Block>
  )
}

function RevoluteBlock({ x, y }: { x: number; y: number }) {
  return (
    <Block x={x} y={y}>
      <path d="M15 12l6-9 5 3-6 11z" fill="#55788f" stroke="#3f5c70" strokeWidth=".6" />
      <path d="M21 3l4-1 1 4-2 1z" fill="#8fb0c5" />
      <path d="M12.500 20h5.500v12l-2 1-3.500-1z" fill="#a9adb0" stroke="#777" strokeWidth=".6" />
      <circle cx="15.500" cy="16" r="6.500" fill="#b3b7ba" stroke="#777" strokeWidth=".6" />
      <circle cx="15.500" cy="16" r="3.200" fill="#4b6c83" />
      <Port x={2} y={9}>B</Port>
      <Port x={2} y={26.500}>q</Port>
      <Port x={29} y={17.500}>F</Port>
    </Block>
  )
}

// from-tag feeding a joint through a signal converter
function FromTag({ x, y, tag, arrow, bend, up, to }: { x: number; y: number; tag: string; arrow: number; bend: number; up: number; to: number }) {
  return (
    <g>
      <path d={`M${x + 2} ${y + 14.500}h25l9-13`} stroke="#bbb" fill="none" strokeWidth="1.500" />
      <path d={`M${x} ${y - 13.200}h26.500l9 13.200-9 13.200H${x}z`} fill="#fff" stroke="#222" />
      <text x={x + 13} y={y + 3} textAnchor="middle">{tag}</text>
      <path d={`M${x + 35.500} ${y}H${arrow}`} stroke="#222" />
      <path d={`M${arrow} ${y - 3.500}l6.500 3.500-6.500 3.500z`} fill="#111" />
      <path d={`M${arrow + 6.500} ${y - 3}l6.500 3-6.500 3z`} fill="#fff" stroke="#222" />
      <path d={`M${arrow + 13} ${y}H${bend - 2}q2 0 2-2V${up + 2}q0-2 2-2H${to - 6}`} stroke="#a07878" fill="none" />
      <path d={`M${to - 6.500} ${up - 3}l6 3-6 3z`} fill="#fff" stroke="#222" />
    </g>
  )
}

const INPUTS: { y: number; port: string; value?: string }[] = [
  { y: 301.500, port: 't' },
  { y: 345, port: 'x_pos', value: 'x_pos' },
  { y: 388.500, port: 'y_pos', value: 'y_pos' },
  { y: 432, port: 'square_size', value: '-C-' },
  { y: 476, port: 'z_offset', value: '-C-' },
  { y: 519.500, port: 'T_segment', value: '1' },
]

const OUTPUTS = [
  { y: 319, port: 'theta1', tag: '[J1]' },
  { y: 410.500, port: 'theta2', tag: '[J2]' },
  { y: 502, port: 'vertical_displacement', tag: '[J3]' },
]

const SOURCES = [
  { y: 266.500, label: 'Transform4' },
  { y: 319, label: 'Transform3' },
  { y: 371, label: 'Transform2' },
  { y: 428, label: 'Transform1' },
]

function Diagram() {
  return (
    <svg viewBox="984 122 934 609" width="934" height="609" className="absolute left-0 top-0" fontFamily="'Liberation Sans', Arial, sans-serif" fontSize="9" fill="#222">
      {/* physical network wires */}
      <g stroke="#999" fill="none">
        <path d="M1155 284h19q2.500 0 2.500 2.500v405q0 2.500-2.500 2.500H1157" />
        <path d="M1155 336.500h22M1155 388.500h22M1155 445.500h22M1155 520h22" />
        <path d="M1155 607h56M1247 607h56M1339 607h56M1430 615.500h56M1522 615.500h56M1613 624.500h56M1705 624.500h56M1796 633.500h56" />
        {SOURCES.map((s) => <path key={s.label} d={`M1090 ${s.y + 17.500}h30`} />)}
      </g>
      {[336.500, 388.500, 445.500, 520, 607].map((y) => <circle key={y} cx="1176.500" cy={y} r="2" fill="#888" />)}
      <circle cx="1157" cy="694" r="1.800" fill="#111" />

      {SOURCES.map((s) => (
        <g key={s.label}>
          <SphereBlock y={s.y} />
          <TransformBlock x={1120} y={s.y} />
          <Label x={1137.500} y={s.y + 43}>{s.label}</Label>
        </g>
      ))}

      <Block x={1120} y={502.500}>
        <path d="M14 20V8M14 20l11-6M14 20l11 8" stroke="#333" />
        <path d="M14 4.500l2 4h-4zM27 12.500l-2 3.500-2-3zM27 29.500l-4-1 2-3z" fill="#222" />
        <path d="M14 20h-4v7M4 27.500h12M4 31l2.500-3.500M8 31l2.500-3.500M12 31l2.500-3.500" stroke="#999" fill="none" />
        <Port x={27} y={17.500}>W</Port>
      </Block>
      <Label x={1137.500} y={545}>World</Label>

      <Block x={1120} y={589.500}>
        <rect x=".5" y="20" width="34" height="14.500" fill="#ececec" />
        <path d="M10 9l6-4 5 1 8 18-5 3-8-13-4 3z" fill="#6c8ea6" />
        <path d="M16 5l5 1 8 18-3 1z" fill="#86a6bb" />
        <path d="M7 16l4-4 3 3-2 4z" fill="#a3bac9" />
        <circle cx="9" cy="26.500" r="3.500" fill="none" stroke="#222" strokeWidth="3" />
        <circle cx="9" cy="26.500" r="5.300" fill="none" stroke="#222" strokeWidth="1.600" strokeDasharray="2.100 2.060" />
        <Port x={29} y={17.500}>C</Port>
      </Block>

      <TransformBlock x={1211.500} y={589.500} />
      <Label x={1229} y={633}>Transform</Label>

      <Block x={1303.500} y={589.500} heavy>
        <text x="2" y="20.500" fontSize="8">F</text><text x="33" y="20.500" fontSize="8" textAnchor="end">F1</text>
      </Block>
      <Label x={1321} y={633}>Base_1_RIGID</Label>
      <FromTag x={1303.500} y={654.500} tag="[J1]" arrow={1349} bend={1381.500} up={624} to={1394.500} />

      <RevoluteBlock x={1394.500} y={598} />
      <Label x={1412} y={641.500}>Revolute2</Label>

      <Block x={1486.500} y={598} heavy>
        <text x="2" y="20.500" fontSize="8">F1</text><text x="33" y="20.500" fontSize="8" textAnchor="end">F</text>
      </Block>
      <Label x={1503.500} y={641}>Arm1_1_RIGID</Label>
      <FromTag x={1486.500} y={663.500} tag="[J2]" arrow={1532} bend={1565} up={633} to={1577.500} />

      <RevoluteBlock x={1577.500} y={606.500} />
      <Label x={1595} y={650}>Revolute1</Label>

      <Block x={1669.500} y={606.500} heavy>
        <text x="2" y="20.500" fontSize="8">F</text><text x="33" y="20.500" fontSize="8" textAnchor="end">F1</text>
      </Block>
      <Label x={1687} y={650}>Arm2_1_RIGID</Label>
      <FromTag x={1665.500} y={672} tag="[J3]" arrow={1719.500} bend={1752.500} up={641.500} to={1761} />

      <Block x={1760.500} y={615.500}>
        <path d="M14.500 4l3.500-1.500L21.500 4v28L18 33.500 14.500 32z" fill="#a9adb0" stroke="#888" strokeWidth=".6" />
        <path d="M9 13l9-4 8.500 4v11L18 28.500 9 24z" fill="#5f86a0" />
        <path d="M9 13l9-4 8.500 4-8.500 4z" fill="#a6c3d6" />
        <path d="M18 17l8.500-4v11L18 28.500z" fill="#38617f" />
        <path d="M14.500 4l3.500-1.500L21.500 4v9L18 14.500 14.500 13z" fill="#b3b7ba" />
        <Port x={2} y={9}>B</Port>
        <Port x={2} y={26.500}>p</Port>
        <Port x={29} y={17.500}>F</Port>
      </Block>
      <Label x={1778} y={659}>Slider1</Label>

      <Block x={1852.500} y={615.500} heavy><text x="3" y="20.500" fontSize="8">F</text></Block>
      <Label x={1869.500} y={659}>EndEffector_1_RIGID</Label>

      <Block x={1120} y={676.500} heavy><text x="17.500" y="21" textAnchor="middle">f(x) = 0</text></Block>

      {/* inverse kinematics function */}
      <path d="M1331 549h144.500V276" stroke="#bbb" strokeWidth="1.500" fill="none" />
      <rect x="1329.500" y="273.500" width="144" height="274" fill="#fff" stroke="#111" strokeWidth="1.600" />
      <path d="M1395 411l5-3 3 3-3 4-2-1z" fill="#3f86b5" />
      <path d="M1400 408q3-4 4-4 2 1 5 11l-4-1-4 4-2-4z" fill="#d9622b" />
      <path d="M1404 404q2 1 5 11l-4-1z" fill="#9c3518" />
      <text x="1401" y="426" textAnchor="middle">inverse_kinematics_simscape</text>

      {INPUTS.map((p) => (
        <g key={p.port}>
          {p.value ? (
            <>
              <path d={`M1266 ${p.y + 14.500}h26v-26`} stroke="#bbb" strokeWidth="1.500" fill="none" />
              <rect x="1264" y={p.y - 13.500} width="26.500" height="27" fill="#fff" stroke="#222" />
              <text x="1277.500" y={p.y + 2} textAnchor="middle">{p.value}</text>
            </>
          ) : (
            <>
              <circle cx="1277.500" cy={p.y} r="9" fill="#fff" stroke="#222" />
              <path d={`M1277.500 ${p.y - 6}v6h6`} stroke="#444" fill="none" />
            </>
          )}
          <path d={`M${p.value ? 1291 : 1286.5} ${p.y}H1323`} stroke="#222" />
          <path d={`M1322 ${p.y - 3.500}l7 3.500-7 3.500z`} fill="#111" />
          <text x="1332" y={p.y + 3} fontSize="8">{p.port}</text>
        </g>
      ))}

      {OUTPUTS.map((p) => (
        <g key={p.port}>
          <text x="1470.500" y={p.y + 3} fontSize="8" textAnchor="end">{p.port}</text>
          <path d={`M1474 ${p.y}h15`} stroke="#222" />
          <path d={`M1488 ${p.y - 3.500}l7 3.500-7 3.500z`} fill="#111" />
          <path d={`M1506 ${p.y + 14.500}h25.500v-26`} stroke="#bbb" strokeWidth="1.500" fill="none" />
          <path d={`M1495 ${p.y}l9-13.500h26v27h-26z`} fill="#fff" stroke="#222" />
          <text x="1516" y={p.y + 3} textAnchor="middle">{p.tag}</text>
        </g>
      ))}
    </svg>
  )
}

const FIELDS = [
  { id: 'x-pos', label: 'X Pos', value: '100' },
  { id: 'y-pos', label: 'Y Pos', value: '100' },
  { id: 'square-size', label: 'Square Size', value: '100' },
  { id: 'z-offset', label: 'Z Offset', value: '50' },
]

function Canvas() {
  return (
    <div className="relative flex-1 overflow-hidden bg-white">
      <Diagram />
      <div className="absolute left-[292px] top-9 flex text-[9px] leading-[10px]">
        {FIELDS.map((f) => (
          <div key={f.id} className="w-[57px] flex flex-col items-center gap-3">
            <label htmlFor={f.id} className="whitespace-nowrap font-['Liberation_Sans',Arial,sans-serif] text-[#111]">{f.label}</label>
            <input id={f.id} defaultValue={f.value} className="w-9 h-[31px] text-center text-[#333] bg-white border border-[#aaa]" />
          </div>
        ))}
      </div>
      <button aria-label="Model data" className="absolute left-[3px] bottom-[3px] w-[17px] h-[17px] flex items-center justify-center bg-[#ededed] border border-[#ddd] rounded-[2px]">
        <Ico><path d="M2 2.500q4-1.500 8 0v8q-4 1-8 0z" fill="#b4b4b4" /><ellipse cx="6" cy="3" rx="4" ry="1.300" fill="#dcdcdc" /></Ico>
      </button>
    </div>
  )
}

const PALETTE: { label: string; icon: ReactNode }[] = [
  { label: 'Zoom in', icon: <><path d="M.5.5h11v11H.5z" stroke="#888" strokeDasharray="1 1.500" /><circle cx="5.500" cy="5.500" r="3.500" fill="#fff" stroke="#444" /><path d="M3.500 5.500h4M5.500 3.500v4M8 8l3.500 3.500" stroke="#333" strokeWidth="1.200" /></> },
  { label: 'Fit to view', icon: <><path d="M0 0h12v12H0z" fill="#777" /><path d="M1.500 1.500h3l-3 3zM10.500 1.500v3l-3-3zM1.500 10.500v-3l3 3zM10.500 10.500h-3l3-3zM4 4h4v4H4z" fill="#fff" /></> },
  { label: 'Toggle ports', icon: <path d="M1 4h9M1 8.500h9M8 2l3 2-3 2M8 6.500l3 2-3 2" stroke="#444" /> },
  { label: 'Annotation', icon: <><path d="M.5 1.500h11v9H.5z" fill="#fff" stroke="#666" /><path d="M2 8l1.500-4L5 8M2.500 7h2" stroke="#222" /><path d="M6.500 4.500h4M6.500 6.500h4M6.500 8.500h4" stroke="#888" /></> },
  { label: 'Image', icon: <><path d="M.5 1.500h11v9H.5z" fill="#ccc" stroke="#888" /><path d="M1 10l3-5 3 3 2-2 2 4z" fill="#777" /></> },
  { label: 'Area', icon: <path d="M1 1h10v10H1z" fill="#f2f4fb" stroke="#8e93a8" /> },
]

const PALETTE_BOTTOM: { label: string; icon: ReactNode }[] = [
  { label: 'Snapshot', icon: <><path d="M.5 3h3l1-1.500h3L8.500 3h3v7H.5z" fill="#c9c9c9" stroke="#888" /><circle cx="6" cy="6.300" r="2.300" fill="#555" /></> },
  { label: 'Bookmarks', icon: <><path d="M1 1h10v10H1z" fill="#ddd" stroke="#999" /><path d="M1 0h5v7L3.500 5 1 7z" fill="#444" /><path d="M7 8h3M8.500 3v2M4 9.500h1" stroke="#777" /></> },
  { label: 'More', icon: <path d="M2 2.500L5.500 6 2 9.500M6.500 2.500L10 6 6.500 9.500" stroke="#333" strokeWidth="1.200" /> },
]

function ModelWindow() {
  return (
    <section className="flex-1 min-w-0 flex flex-col border-l-2 border-[#8a8a8a] bg-[#f0f0f0]">
      <header className="relative h-[19px] shrink-0 flex items-stretch justify-between bg-[#003f74] text-white">
        <nav className="flex text-[7px] pt-px">
          <button className="w-[70px] mx-px bg-[#f4f4f4] text-[#444]">SIMULATION</button>
          <button className="w-[74px]">DEBUG</button>
          <button className="w-[74px]">MODELING</button>
          <button className="w-[74px]">FORMAT</button>
          <button className="w-[74px]">APPS</button>
        </nav>
        <div className="flex items-center">
          <div className="h-[15px] w-[45px] flex items-center gap-1.5 pl-3 bg-[#7094b8] [clip-path:polygon(5px_0,100%_0,100%_100%,5px_100%,0_50%)]">
            <button aria-label="Save" className="flex"><Ico>{FILE_ACTIONS[1].icon}</Ico></button>
            <button aria-label="Undo" className="flex"><Ico><path d="M2 4h6q3 2 1 6M4.500 1.500L2 4l2.500 2.500" stroke="#5a82ab" strokeWidth="1.300" /></Ico></button>
          </div>
          <span className="w-[124px]" />
        </div>
        {/* call participant tile floating over the window */}
        <div className="absolute right-0 top-0 z-10 w-[124px] h-12 flex flex-col justify-between bg-[#1b1b1b] border-b border-black pt-[7px] pb-px">
          <span className="text-center font-bold leading-[10px]">Jackson Voigt</span>
          <span className="pl-0.5 leading-[10px] text-[#ddd]">Jackson Voigt</span>
        </div>
      </header>

      <ModelRibbon />

      <div className="h-4 shrink-0 flex items-center border-b border-[#999]">
        <div className="w-[62px] flex items-center justify-between pl-1 pr-1">
          <button aria-label="Back" className="flex"><Ico><path d="M6 1v3h6v4H6v3L0 6z" fill="#ececec" stroke="#c8c8c8" /></Ico></button>
          <button aria-label="Forward" className="flex"><Ico><path d="M6 1v3H0v4h6v3l6-5z" fill="#e4e4e4" stroke="#c8c8c8" /></Ico></button>
          <button aria-label="Up" className="flex"><Ico><path d="M1 6h3v6h4V6h3L6 0z" fill="#e4e4e4" stroke="#c8c8c8" /></Ico></button>
        </div>
        <button className="w-[70px] h-full bg-white text-[7px] text-black">JacksonVoigtScara</button>
        <span className="flex-1" />
        <button aria-label="Keyboard" className="mr-1 flex"><Ico><path d="M.5 3.500h11v5H.5z" fill="#ddd" stroke="#999" /><path d="M2 5h8M2 7h8" stroke="#999" strokeDasharray="1 1" /></Ico></button>
      </div>

      <div className="flex-1 min-h-0 flex">
        <aside className="w-[22px] shrink-0 flex flex-col items-center border-r border-[#a8a8a8]">
          <button aria-label="Hide browser" className="h-[19px] flex items-center"><Ico size="w-2 h-2"><circle cx="6" cy="6" r="5" fill="#ddd" stroke="#666" /><path d="M9 6H4M6 3.500L3.500 6 6 8.500" stroke="#333" strokeWidth="1.500" /></Ico></button>
          <span className="w-[13px] h-px my-[3px] bg-[#c4c4c4]" />
          <div className="h-[118px] flex flex-col">
            {PALETTE.map((p) => (
              <button key={p.label} aria-label={p.label} className="flex-1 flex items-center"><Ico size="w-[11px] h-[11px]">{p.icon}</Ico></button>
            ))}
          </div>
          <span className="flex-1" />
          <div className="flex flex-col pb-px">
            {PALETTE_BOTTOM.map((p) => (
              <button key={p.label} aria-label={p.label} className="h-5 flex items-center"><Ico size="w-[11px] h-[11px]">{p.icon}</Ico></button>
            ))}
          </div>
        </aside>
        <main className="flex-1 min-w-0 flex flex-col border-r-2 border-b border-[#b5b5b5]">
          <div className="h-[22px] shrink-0 flex items-center gap-1 pl-px pr-1 bg-white border-b-2 border-[#a8a8a8]">
            <Ico><path d="M.5.5h11v11H.5z" fill="#eee" stroke="#888" /><path d="M2 2l4 2.500L2 7z" fill="#236da8" /><path d="M5.500 6h5v4.500h-5z" fill="#a14c3c" /></Ico>
            <button className="-ml-0.5">JacksonVoigtScara</button>
            <Crumb />
            <span className="flex-1" />
            <Caret className="text-black" />
          </div>
          <Canvas />
        </main>
      </div>

      <footer className="h-[15px] shrink-0 grid grid-cols-3 items-center pl-0.5 pr-[15px]">
        <span>Ready</span>
        <span className="text-center pl-9">125%</span>
        <a href="#solver" className="text-right text-[#1c1c8c]">auto(VariableStepDiscrete)</a>
      </footer>
    </section>
  )
}

export default function App() {
  return (
    <div className="h-screen flex flex-col bg-[#2b3a2f] pb-1 overflow-hidden font-['Open_Sans','Noto_Sans',sans-serif] text-[8px] leading-[10px] text-[#2b2b2b]">
      <div className="flex-1 min-h-0 flex">
        <ExplorerWindow />
        <ModelWindow />
      </div>
    </div>
  )
}
